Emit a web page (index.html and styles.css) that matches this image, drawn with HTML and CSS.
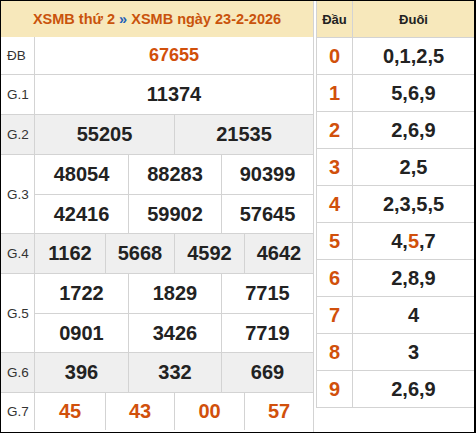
FILE: index.html
```html
<!DOCTYPE html>
<html lang="vi">
<head>
<meta charset="utf-8">
<title>XSMB 23-2-2026</title>
<link rel="stylesheet" href="styles.css">
</head>
<body>
<div class="frame">
  <div class="kq">
    <div class="kq-head">XSMB thứ 2 <span class="sep">»</span> XSMB ngày 23-2-2026</div>
    <div class="prize first">
      <div class="lbl">ĐB</div>
      <div class="vals"><div class="line c1 db"><span class="num red sm">67655</span></div></div>
    </div>
    <div class="prize">
      <div class="lbl">G.1</div>
      <div class="vals"><div class="line c1"><span class="num">11374</span></div></div>
    </div>
    <div class="prize alt">
      <div class="lbl">G.2</div>
      <div class="vals"><div class="line c2"><span class="num">55205</span><span class="num">21535</span></div></div>
    </div>
    <div class="prize">
      <div class="lbl">G.3</div>
      <div class="vals">
        <div class="line c3"><span class="num">48054</span><span class="num">88283</span><span class="num">90399</span></div>
        <div class="line c3"><span class="num">42416</span><span class="num">59902</span><span class="num">57645</span></div>
      </div>
    </div>
    <div class="prize alt">
      <div class="lbl">G.4</div>
      <div class="vals"><div class="line c4"><span class="num">1162</span><span class="num">5668</span><span class="num">4592</span><span class="num">4642</span></div></div>
    </div>
    <div class="prize">
      <div class="lbl">G.5</div>
      <div class="vals">
        <div class="line c3"><span class="num">1722</span><span class="num">1829</span><span class="num">7715</span></div>
        <div class="line c3"><span class="num">0901</span><span class="num">3426</span><span class="num">7719</span></div>
      </div>
    </div>
    <div class="prize alt">
      <div class="lbl">G.6</div>
      <div class="vals"><div class="line c3"><span class="num">396</span><span class="num">332</span><span class="num">669</span></div></div>
    </div>
    <div class="prize">
      <div class="lbl">G.7</div>
      <div class="vals"><div class="line c4 last"><span class="num red">45</span><span class="num red">43</span><span class="num red">00</span><span class="num red">57</span></div></div>
    </div>
  </div>

  <div class="lt">
    <div class="lt-row lt-head"><span>Đầu</span><span>Đuôi</span></div>
    <div class="lt-row"><span class="d">0</span><span class="t">0,1,2,5</span></div>
    <div class="lt-row"><span class="d">1</span><span class="t">5,6,9</span></div>
    <div class="lt-row"><span class="d">2</span><span class="t">2,6,9</span></div>
    <div class="lt-row"><span class="d">3</span><span class="t">2,5</span></div>
    <div class="lt-row"><span class="d">4</span><span class="t">2,3,5,5</span></div>
    <div class="lt-row"><span class="d">5</span><span class="t">4,<em class="hl">5</em>,7</span></div>
    <div class="lt-row"><span class="d">6</span><span class="t">2,8,9</span></div>
    <div class="lt-row"><span class="d">7</span><span class="t">4</span></div>
    <div class="lt-row"><span class="d">8</span><span class="t">3</span></div>
    <div class="lt-row"><span class="d">9</span><span class="t">2,6,9</span></div>
  </div>
</div>
</body>
</html>
```

FILE: styles.css
```css
* { box-sizing: border-box; }

html, body {
  margin: 0;
  padding: 0;
  background: #fff;
}

body {
  font-family: "Liberation Sans", Arial, sans-serif;
  color: #222;
}

.frame {
  width: 476px;
  height: 433px;
  border-style: solid;
  border-color: #000;
  border-width: 1px 2px 1px 1px;
  display: flex;
  gap: 2px;
  overflow: hidden;
}

/* ---------- results table ---------- */
.kq {
  width: 313px;
  border-right: 1px solid #d3d3d3;
  display: flex;
  flex-direction: column;
}

.kq-head {
  height: 36px;
  background: #f7e8bb;
  color: #c9530c;
  font-weight: bold;
  font-size: 14.5px;
  display: flex;
  align-items: center;
  justify-content: center;
  white-space: pre;
}

.kq-head .sep { color: #1e5fb8; }

.prize {
  display: flex;
  border-top: 1px solid #d3d3d3;
}
.prize.first { border-top: 0; }
.prize.alt { background: #efefef; }

.lbl {
  width: 34px;
  border-right: 1px solid #d3d3d3;
  padding-left: 6px;
  display: flex;
  align-items: center;
  font-size: 13.5px;
  color: #333;
}

.vals {
  width: 278px;
  display: flex;
  flex-direction: column;
}

.line {
  display: grid;
  height: 39px;
}
.line + .line { border-top: 1px solid #d3d3d3; }
.line.db { height: 37px; }
.line.last { height: 37px; }

.c1 { grid-template-columns: 278px; }
.c2 { grid-template-columns: 139px 139px; }
.c3 { grid-template-columns: 93px 93px 92px; }
.c4 { grid-template-columns: 70px 69px 70px 69px; }

.num {
  display: flex;
  align-items: center;
  justify-content: center;
  font-weight: bold;
  font-size: 20px;
  color: #222;
}
.num + .num { border-left: 1px solid #d3d3d3; }
.num.red { color: #d1500b; }
.num.sm { font-size: 18px; }

/* ---------- loto table ---------- */
.lt {
  width: 158px;
  align-self: flex-start;
  border-left: 1px solid #d3d3d3;
  border-bottom: 1px solid #d3d3d3;
}

.lt-row {
  display: grid;
  grid-template-columns: 35px 122px;
  height: 37px;
  border-top: 1px solid #d3d3d3;
}
.lt-row span {
  display: flex;
  align-items: center;
  justify-content: center;
}
.lt-row span + span { border-left: 1px solid #d3d3d3; }

.lt-head {
  height: 36px;
  border-top: 0;
  background: #f7e8bb;
  font-weight: bold;
  font-size: 13px;
  color: #222;
}

.lt-row .d {
  font-weight: bold;
  font-size: 20px;
  color: #d1500b;
}
.lt-row .t {
  font-weight: bold;
  font-size: 20px;
  color: #222;
}
.hl {
  font-style: normal;
  color: #d1500b;
}
```
